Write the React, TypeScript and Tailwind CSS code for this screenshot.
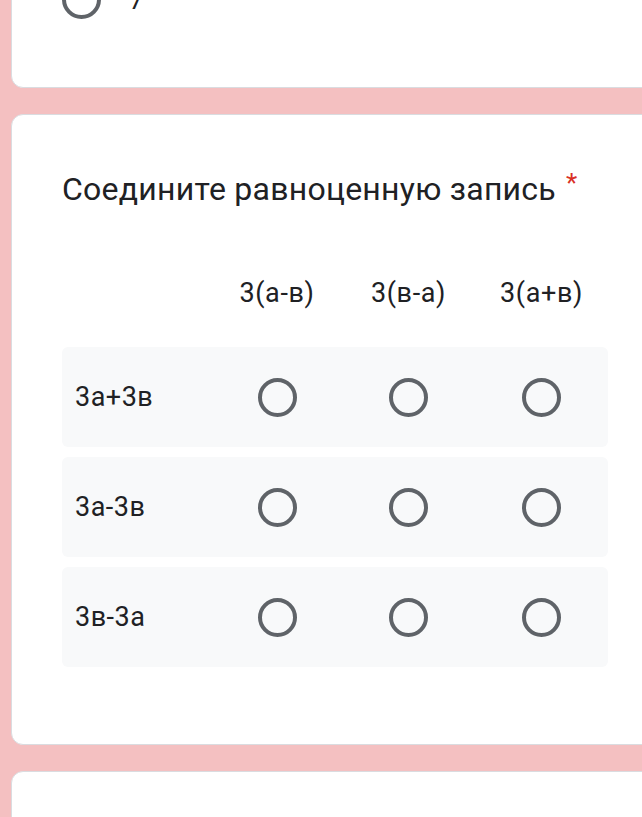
import React from "react";

const columns = ["3(а-в)", "3(в-а)", "3(а+в)"];
const rows = ["3а+3в", "3а-3в", "3в-3а"];

function Radio() {
  return (
    <span className="block h-[39px] w-[39px] rounded-full border-[4px] border-[#5f6368]" />
  );
}

export default function App() {
  return (
    <div
      className="flex h-[817px] w-[642px] flex-col gap-[26px] overflow-hidden bg-[#f4c0c1] pl-[11px] text-[#202124]"
      style={{ fontFamily: "Roboto, 'Noto Sans', sans-serif" }}
    >
      {/* previous question, cut off at the top */}
      <div className="-mr-6 -mt-[40px] h-[128px] shrink-0 rounded-xl border border-[#dadce0] bg-white">
        <div className="flex items-center gap-[28px] pl-[50px] pt-[19px]">
          <Radio />
          <span className="text-[26px] leading-none">7</span>
        </div>
      </div>

      {/* grid question */}
      <div className="-mr-6 shrink-0 rounded-xl border border-[#dadce0] bg-white pb-[77px] pl-[50px] pr-[33px] pt-[56px]">
        <h2 className="flex items-start text-[32px] leading-[36px] tracking-[0.25px]">
          Соедините равноценную запись
          <span className="ml-[10px] mt-[-6px] text-[26px] text-[#d93025]">*</span>
        </h2>

        <div className="mt-[70px] grid grid-cols-[150px_130px_133px_133px] text-[27px] tracking-[0.6px]">
          <div />
          {columns.map((c) => (
            <div key={c} className="text-center leading-[32px]">
              {c}
            </div>
          ))}
        </div>

        <div className="mt-[38px] flex w-[546px] flex-col gap-[10px]">
          {rows.map((r) => (
            <div
              key={r}
              className="grid h-[100px] grid-cols-[150px_130px_133px_133px] items-center rounded-md bg-[#f8f9fa]"
            >
              <div className="pl-[13px] text-[27px] tracking-[0.5px]">{r}</div>
              {columns.map((c) => (
                <div key={c} className="flex justify-center">
                  <Radio />
                </div>
              ))}
            </div>
          ))}
        </div>
      </div>

      {/* next card */}
      <div className="-mr-6 h-[80px] shrink-0 rounded-xl border border-[#dadce0] bg-white" />
    </div>
  );
}
